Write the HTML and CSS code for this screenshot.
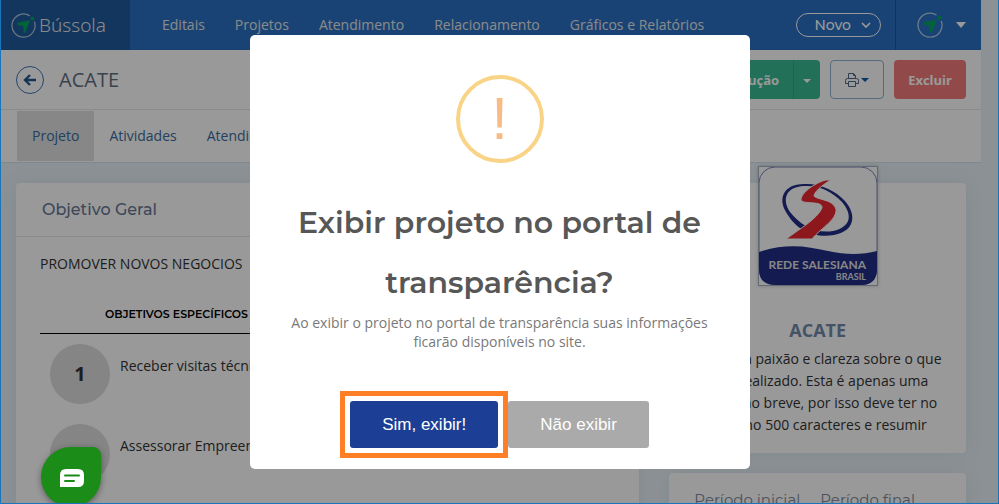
FILE: index.html
```html
<!DOCTYPE html>
<html lang="pt-BR">
<head>
<meta charset="utf-8">
<meta name="viewport" content="width=device-width, initial-scale=1">
<title>Bússola - ACATE</title>
<link rel="stylesheet" href="styles.css">
</head>
<body>
<svg class="defs" aria-hidden="true">
  <symbol id="compass" viewBox="0 0 26 26">
    <path d="M19.500 3A12 12 0 1 0 24.300 9" fill="none" stroke="#fff" stroke-opacity=".65" stroke-width="1.300"/>
    <path d="M20 7.500L15 20Q13.500 22.500 13 19.500V14L7 12.500Q5 10.500 8 10Z" fill="#00a562"/>
    <circle cx="22.300" cy="5.800" r="2" fill="#00a562"/>
  </symbol>
</svg>

<div class="page">
  <header class="navbar">
    <a class="brand" href="#">
      <svg class="brand-icon"><use href="#compass"/></svg>
      <span>Bússola</span>
    </a>
    <nav class="menu">
      <a href="#">Editais</a>
      <a href="#">Projetos</a>
      <a href="#">Atendimento</a>
      <a href="#">Relacionamento</a>
      <a href="#">Gráficos e Relatórios</a>
    </nav>
    <button class="btn-novo" type="button">Novo
      <svg width="10" height="6" viewBox="0 0 10 6"><path d="M1 1L5 5L9 1" fill="none" stroke="#fff" stroke-width="1.700"/></svg>
    </button>
    <button class="user" type="button" aria-label="Conta">
      <svg class="user-icon"><use href="#compass"/></svg>
      <span class="caret caret-lg"></span>
    </button>
  </header>

  <div class="title-bar">
    <a class="back" href="#" aria-label="Voltar">
      <svg width="14" height="12" viewBox="0 0 14 12"><path d="M7 1L2 6L7 11M2 6H13" fill="none" stroke="#23598f" stroke-width="2.400"/></svg>
    </a>
    <h1>ACATE</h1>
    <div class="actions">
      <div class="btn-group">
        <button class="btn btn-green" type="button">Em execução</button>
        <button class="btn btn-green btn-split" type="button" aria-label="Mais"><span class="caret"></span></button>
      </div>
      <button class="btn btn-print" type="button" aria-label="Imprimir">
        <svg width="14" height="14" viewBox="0 0 14 14" fill="none" stroke="#4d688c">
          <path d="M3.500 6V.5H8.500L10.500 2.500V6M8.500 .5V2.500H10.500"/>
          <path d="M3.500 10.500H.5V7.500Q.5 5.500 2.500 5.500H11.500Q13.500 5.500 13.500 7.500V10.500H10.500"/>
          <path d="M3.500 8.500H10.500V13.500H3.500Z"/>
        </svg>
        <span class="caret"></span>
      </button>
      <button class="btn btn-red" type="button">Excluir</button>
    </div>
  </div>

  <nav class="tabs">
    <a class="active" href="#">Projeto</a>
    <a href="#">Atividades</a>
    <a href="#">Atendimentos</a>
  </nav>

  <main class="row">
    <div class="col-main">
      <section class="card">
        <h2 class="card-title">Objetivo Geral</h2>
        <div class="card-body">
          <p class="goal">PROMOVER NOVOS NEGOCIOS</p>
          <h3 class="list-title">OBJETIVOS ESPECÍFICOS</h3>
          <ol class="goals">
            <li><span class="number">1</span><span>Receber visitas técnicas</span></li>
            <li><span class="number">2</span><span>Assessorar Empreendedores</span></li>
          </ol>
        </div>
      </section>
    </div>
    <div class="col-side">
      <section class="card profile">
        <svg class="logo" viewBox="0 0 120 120" role="img" aria-label="Rede Salesiana Brasil">
          <rect width="120" height="120" fill="#fff"/>
          <rect x="1" y="1" width="118" height="118" rx="16" fill="#fff" stroke="#7f80bb"/>
          <path d="M1 86C28 77 48 80 70 85C88 89 104 89 119 85V103Q119 119 103 119H17Q1 119 1 103Z" fill="#202d87"/>
          <path fill-rule="evenodd" d="M46 18C25 18 20 33 28 46C39 66 58 72 76 69C97 65 99 49 87 35C77 24 61 17 46 18ZM46 20C61 19 75 26 84 36C95 49 93 61 75 65C58 68 42 59 32 46C24 34 27 21 46 20Z" fill="#202d87"/>
          <path d="M73 14C62 20 56 27 56 30C59 34 75 33 78 43C79 54 64 61 54 73H28C43 62 59 53 64 42C65 34 45 39 43 34C43 26 59 16 68 14Z" fill="#e9272f" stroke="#fff" stroke-width="1"/>
          <text x="108" y="103" text-anchor="end" class="logo-text">REDE SALESIANA</text>
          <text x="108" y="114" text-anchor="end" class="logo-text logo-small">BRASIL</text>
          <rect x=".5" y=".5" width="119" height="119" fill="none" stroke="#a6b1c2"/>
        </svg>
        <h2>ACATE</h2>
        <p>Fale com paixão e clareza sobre o que<br>será realizado. Esta é apenas uma<br>descrição breve, por isso deve ter no<br>máximo 500 caracteres e resumir</p>
      </section>
      <section class="card period">
        <span>Período inicial</span>
        <span>Período final</span>
      </section>
    </div>
  </main>
</div>

<div class="overlay">
  <div class="modal" role="dialog" aria-modal="true" aria-labelledby="modal-title">
    <div class="warning">!</div>
    <h2 id="modal-title">Exibir projeto no portal de transparência?</h2>
    <p>Ao exibir o projeto no portal de transparência suas informações ficarão disponíveis no site.</p>
    <div class="modal-buttons">
      <div class="highlight"><button class="confirm" type="button">Sim, exibir!</button></div>
      <button class="cancel" type="button">Não exibir</button>
    </div>
  </div>
</div>

<button class="chat" type="button" aria-label="Chat">
  <svg width="24" height="18" viewBox="0 0 24 18">
    <path d="M6 0H18Q24 0 24 6V12Q24 18 18 18H0V6Q0 0 6 0Z" fill="#fff"/>
    <path d="M5 6.500H19M5 12H14" stroke="#1b8c18" stroke-width="2" stroke-linecap="round"/>
  </svg>
</button>
<div class="frame"></div>
</body>
</html>
```

FILE: styles.css
```css
* {
  box-sizing: border-box;
}

body {
  margin: 0;
  height: 100vh;
  overflow: hidden;
  background: #e8f2f8;
  color: #333;
  font-family: "Open Sans", "Noto Sans", sans-serif;
  font-size: 14px;
  line-height: 22px;
}

h1, h2, h3, p, ol {
  margin: 0;
  padding: 0;
}

a {
  color: inherit;
  text-decoration: none;
}

button {
  border: 0;
  font-family: inherit;
  font-size: 14px;
  cursor: pointer;
}

.defs {
  position: absolute;
  width: 0;
  height: 0;
}

.page {
  height: 100vh;
  margin: 0 18px 0 1px;
}

.caret {
  display: inline-block;
  border-top: 4px solid;
  border-left: 4px solid transparent;
  border-right: 4px solid transparent;
  vertical-align: middle;
}

.caret-lg {
  border-width: 6px 5px 0;
}

/* top bar */
.navbar {
  display: flex;
  align-items: center;
  height: 50px;
  background: #2a71c3;
  color: #e6e6e6;
}

.brand {
  display: flex;
  align-items: center;
  gap: 3px;
  width: 129px;
  height: 50px;
  padding-left: 10px;
  background: #205b9e;
  font-family: "Noto Sans", sans-serif;
  font-size: 19px;
  font-weight: 300;
}

.brand-icon {
  width: 25px;
  height: 25px;
}

.menu {
  display: flex;
  flex: 1;
  gap: 30px;
  padding-left: 32px;
  white-space: nowrap;
}

.btn-novo {
  display: flex;
  align-items: center;
  gap: 10px;
  height: 24px;
  padding: 0 9px 0 17px;
  border: 1px solid #fff;
  border-radius: 12px;
  background: transparent;
  color: #fff;
  font-family: Montserrat, Inter, sans-serif;
  font-weight: 500;
}

.user {
  display: flex;
  align-items: center;
  gap: 13px;
  height: 50px;
  margin-left: 14px;
  padding: 0 15px 0 21px;
  border-left: 1px solid #1b5597;
  background: transparent;
  color: #fff;
}

.user-icon {
  width: 26px;
  height: 26px;
}

/* title and actions */
.title-bar {
  display: flex;
  align-items: center;
  height: 60px;
  padding: 0 15px;
  border-bottom: 1px solid #e3e9ec;
  background: #fff;
}

.back {
  display: flex;
  align-items: center;
  justify-content: center;
  width: 28px;
  height: 28px;
  border: 1px solid #3c76b8;
  border-radius: 50%;
}

.title-bar h1 {
  margin-left: 15px;
  color: #5f7084;
  font-size: 20px;
  font-weight: 400;
}

.actions {
  display: flex;
  gap: 10px;
  margin-left: auto;
}

.btn-group {
  display: flex;
}

.btn {
  height: 39px;
  padding: 0 14px;
  border-radius: 4px;
  color: #fff;
  font-size: 13px;
  font-weight: 700;
}

.btn-green {
  border-radius: 4px 0 0 4px;
  background: #37bb91;
}

.btn-split {
  padding: 0 9px;
  border-left: 1px solid #2da781;
  border-radius: 0 4px 4px 0;
}

.btn-print {
  display: flex;
  align-items: center;
  gap: 2px;
  border: 1px solid #8fb2d2;
  background: #fff;
  color: #0b5ba5;
}

.btn-red {
  background: #f37b7b;
}

.tabs {
  display: flex;
  height: 53px;
  padding: 1px 16px;
  border-bottom: 1px solid #d5e3e8;
  background: #fff;
  color: #3a6c9e;
}

.tabs a {
  height: 50px;
  padding: 0 15px;
  line-height: 50px;
}

.tabs .active {
  background: #e1e1e1;
}

/* content */
.row {
  display: flex;
  padding-top: 20px;
}

.col-main {
  display: flex;
  width: 66.667%;
  min-height: 400px;
  padding: 0 15px;
}

.col-side {
  width: 33.333%;
  padding: 0 15px;
}

.card {
  flex: 1;
  border-radius: 4px;
  background: #fff;
  box-shadow: 0 0 20px rgba(80, 100, 110, 0.08);
}

.card-title {
  height: 54px;
  padding-left: 26px;
  border-bottom: 1px solid #e3e9ef;
  color: #677894;
  font-family: Montserrat, Inter, sans-serif;
  font-size: 16px;
  font-weight: 500;
  line-height: 53px;
}

.card-body {
  padding: 16px 24px;
}

.list-title {
  margin-top: 28px;
  padding: 0 65px 8px;
  border-bottom: 1px solid #000;
  color: #000;
  font-family: Montserrat, Inter, sans-serif;
  font-size: 11px;
  font-weight: 600;
}

.goals {
  list-style: none;
}

.goals li {
  display: flex;
  gap: 10px;
  padding: 10px;
  line-height: 44px;
}

.number {
  width: 60px;
  height: 60px;
  border-radius: 50%;
  background: #dedede;
  font-size: 20px;
  font-weight: 700;
  line-height: 60px;
  text-align: center;
}

.profile {
  display: flex;
  flex-direction: column;
  align-items: center;
  padding-bottom: 17px;
  text-align: center;
}

.logo {
  width: 120px;
  height: 120px;
  margin-top: -17px;
  box-shadow: 0 0 4px rgba(0, 0, 0, 0.2);
}

.logo-text {
  fill: #e0e0e0;
  font-family: Lato, sans-serif;
  font-size: 12px;
  font-weight: 700;
}

.logo-small {
  font-size: 9px;
}

.profile h2 {
  margin: 33px 0 7px;
  color: #748bab;
  font-size: 18px;
  font-weight: 700;
}

.period {
  display: flex;
  gap: 20px;
  margin-top: 20px;
  padding: 16px 25px;
  color: #7e8899;
  font-family: Montserrat, Inter, sans-serif;
  font-size: 15px;
}

/* confirmation dialog */
.overlay {
  position: fixed;
  inset: 0;
  display: flex;
  align-items: center;
  justify-content: center;
  background: rgba(0, 0, 0, 0.4);
}

.modal {
  width: 500px;
  padding: 40px 20px 21px;
  border-radius: 5px;
  background: #fff;
  text-align: center;
}

.warning {
  width: 88px;
  height: 88px;
  margin: 0 auto 30px;
  border: 4px solid #f9d487;
  border-radius: 50%;
  color: #f8bb86;
  font-family: "Liberation Sans", Arial, sans-serif;
  font-size: 60px;
  line-height: 80px;
}

.modal h2 {
  color: #575757;
  font-family: Montserrat, Inter, sans-serif;
  font-size: 30px;
  font-weight: 600;
  line-height: 60px;
}

.modal p {
  padding: 0 20px;
  color: #797979;
  line-height: 19px;
}

.modal-buttons {
  display: flex;
  justify-content: center;
  gap: 10px;
  margin-top: 50px;
}

.modal-buttons button {
  height: 47px;
  padding: 0 32px;
  border-radius: 3px;
  color: #fff;
  font-family: "Liberation Sans", Arial, sans-serif;
  font-size: 17px;
}

.modal-buttons .confirm {
  background: #1c3f95;
}

.modal-buttons .cancel {
  background: #aaa;
}

.highlight {
  position: relative;
}

.highlight::after {
  content: "";
  position: absolute;
  inset: -10px;
  border: 5px solid #ff7f27;
  pointer-events: none;
}

.chat {
  position: fixed;
  left: 41px;
  bottom: -3px;
  display: flex;
  align-items: center;
  justify-content: center;
  width: 60px;
  height: 60px;
  padding: 2px 0 0 2px;
  border-radius: 50% 8px 50% 50%;
  background: #1b8c18;
  box-shadow: 0 2px 6px rgba(0, 0, 0, 0.4);
}

.frame {
  position: fixed;
  inset: 0;
  border: 1px solid #1b75bb;
  border-top: 0;
  pointer-events: none;
}
```
